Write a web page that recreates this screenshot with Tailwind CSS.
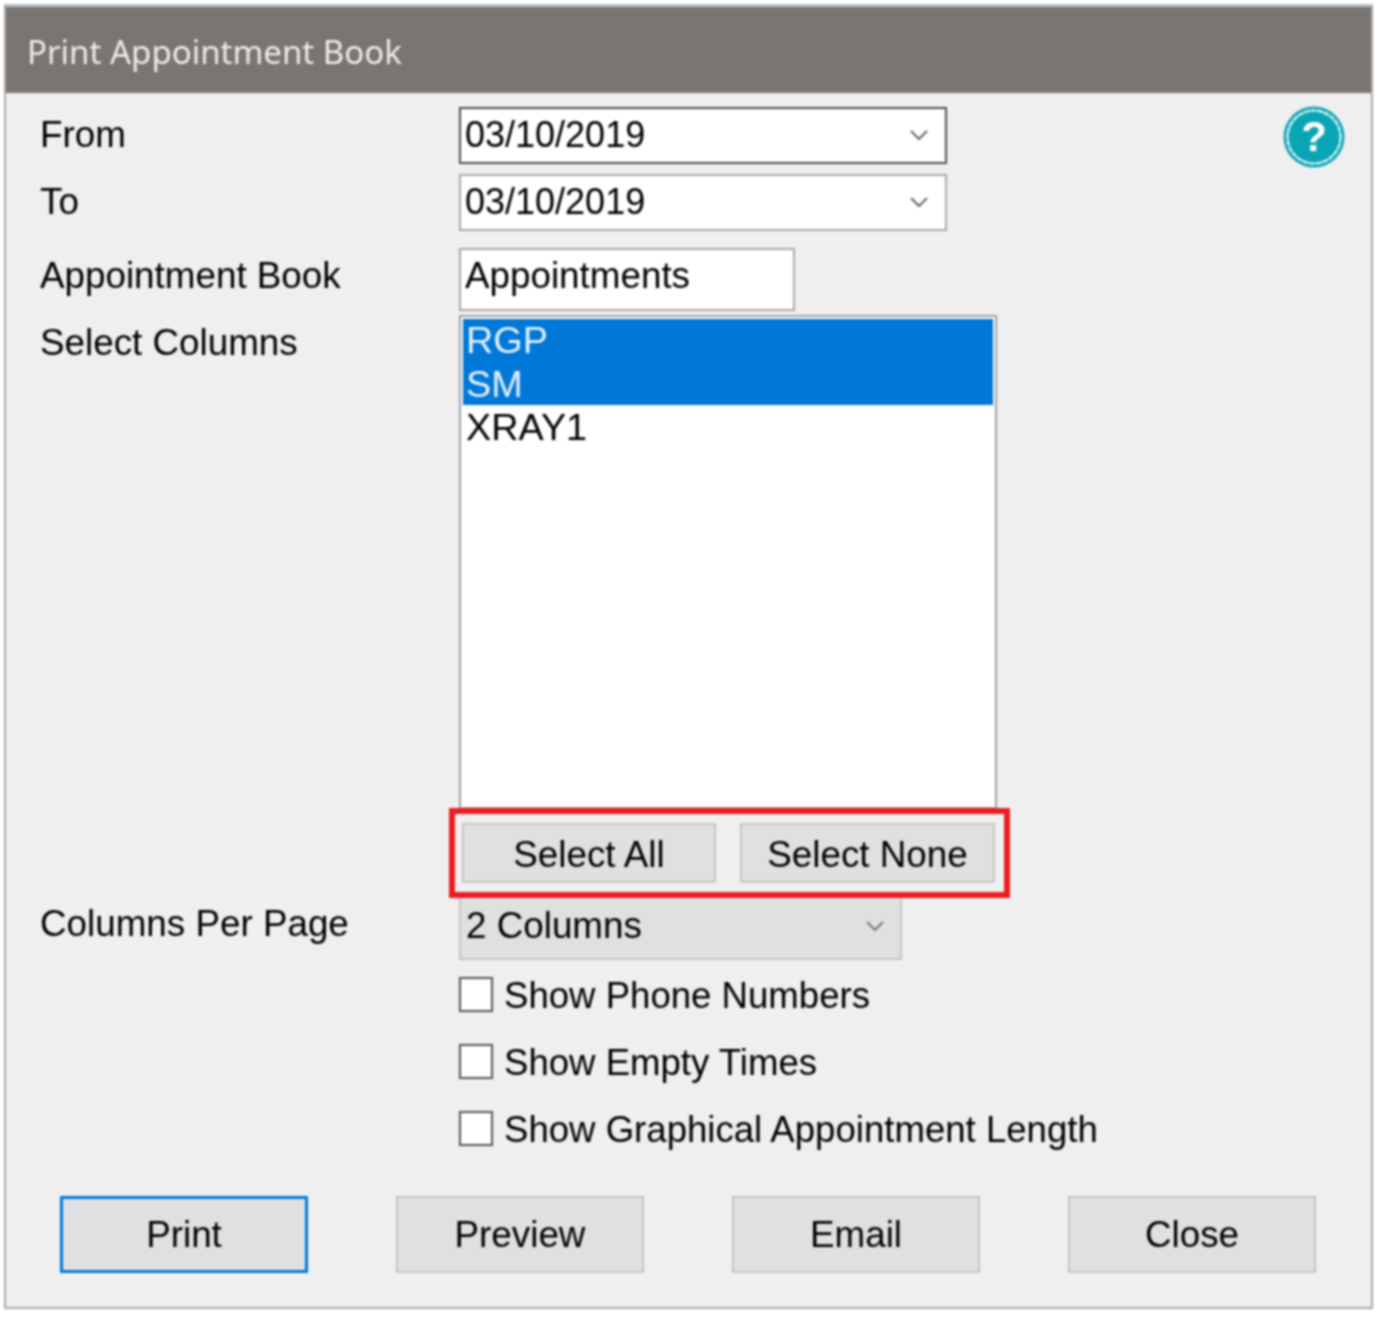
<!DOCTYPE html>
<html><head><meta charset="utf-8"><script src="https://cdn.jsdelivr.net/npm/@tailwindcss/browser@4"></script></head>
<body class="bg-white">
<div class="w-[1382px] h-[1317px] pt-[4px] pl-[4px] font-['Liberation_Sans',sans-serif] text-[36.8px] leading-none text-[#000] blur-[0.8px]">
  <div class="w-[1369px] h-[1305px] border-2 border-t-[3px] border-[#a8a8a8] border-t-[#b9bec2] bg-[#efefef] flex flex-col">
    <div class="h-[86px] shrink-0 bg-[#7b7572] pl-[21px] pt-[2px] flex items-center font-['Noto_Sans',sans-serif] text-[33px] text-[#ececec]">Print Appointment Book</div>
    <div class="relative flex-1 pl-[34px] pt-[14px] flex flex-col">
      <div class="flex h-[57px] items-center">
        <div class="w-[419px]">From</div>
        <div class="w-[488px] h-[57px] border-2 border-[#4e4e4e] bg-white flex items-center justify-between pl-[4px] pr-[16px] pb-[2px] text-[36px]">03/10/2019
          <svg class="w-[20px] h-[12px]" viewBox="0 0 20 12" fill="none" stroke="#666" stroke-width="2"><path d="M2 2l8 8 8-8"/></svg>
        </div>
      </div>
      <div class="flex h-[57px] items-center mt-[10px]">
        <div class="w-[419px]">To</div>
        <div class="w-[488px] h-[57px] border-2 border-[#a8a8a8] bg-white flex items-center justify-between pl-[4px] pr-[16px] pb-[2px] text-[36px]">03/10/2019
          <svg class="w-[20px] h-[12px]" viewBox="0 0 20 12" fill="none" stroke="#666" stroke-width="2"><path d="M2 2l8 8 8-8"/></svg>
        </div>
      </div>
      <div class="flex h-[63px] items-center mt-[17px]">
        <div class="w-[419px] pb-[6px]">Appointment Book</div>
        <div class="w-[336px] h-[63px] border-2 border-[#a8a8a8] bg-white flex items-center pl-[4px] pb-[6px]">Appointments</div>
      </div>
      <div class="flex h-[494px] mt-[4px]">
        <div class="w-[419px] pt-[10px]">Select Columns</div>
        <div class="w-[538px] border-2 border-[#a0a0a8] bg-white pt-[2px] pl-[2px] pr-[2px] text-[37.8px]">
          <div class="bg-[#0078d7] text-[#e4f1ff] pl-[3px] h-[43px] flex items-center">RGP</div>
          <div class="bg-[#0078d7] text-[#e4f1ff] pl-[3px] h-[43px] flex items-center pt-[2px]">SM</div>
          <div class="pl-[3px] h-[45px] flex items-center">XRAY1</div>
        </div>
      </div>
      <div class="ml-[409px] w-[561px] h-[90px] border-[6px] border-[#ed1c24] flex items-center pl-[7px] gap-[24px] relative z-10 -mt-[1px]">
        <div class="w-[254px] h-[60px] border-2 border-[#c4c4c4] bg-[#e0e0e0] flex items-center justify-center pt-[5px]">Select All</div>
        <div class="w-[255px] h-[60px] border-2 border-[#c4c4c4] bg-[#e0e0e0] flex items-center justify-center pt-[5px]">Select None</div>
      </div>
      <div class="flex -mt-[4px]">
        <div class="w-[419px] pt-[12px]">Columns Per Page</div>
        <div class="w-[443px] h-[66px] border-2 border-t-0 border-[#c4c4c4] bg-[#e0e0e0] flex items-center justify-between pl-[5px] pr-[15px]">2 Columns
          <svg class="w-[20px] h-[12px]" viewBox="0 0 20 12" fill="none" stroke="#777" stroke-width="2"><path d="M2 2l8 8 8-8"/></svg>
        </div>
      </div>
      <div class="ml-[419px] mt-[17px] flex flex-col gap-[32px] text-[36.6px]">
        <div class="flex items-center gap-[11px] h-[35px]"><span class="w-[34px] h-[35px] border-2 border-[#555] bg-white"></span><span class="pt-[4px]">Show Phone Numbers</span></div>
        <div class="flex items-center gap-[11px] h-[35px]"><span class="w-[34px] h-[35px] border-2 border-[#555] bg-white"></span><span class="pt-[4px]">Show Empty Times</span></div>
        <div class="flex items-center gap-[11px] h-[35px]"><span class="w-[34px] h-[35px] border-2 border-[#555] bg-white"></span><span class="pt-[4px]">Show Graphical Appointment Length</span></div>
      </div>
      <div class="flex mt-[50px] ml-[20px] gap-[88px]">
        <div class="w-[248px] h-[77px] border-[3px] border-[#0078d7] bg-[#e0e0e0] flex items-center justify-center pt-[2px]">Print</div>
        <div class="w-[248px] h-[77px] border-2 border-[#c4c4c4] bg-[#e0e0e0] flex items-center justify-center pt-[2px]">Preview</div>
        <div class="w-[248px] h-[77px] border-2 border-[#c4c4c4] bg-[#e0e0e0] flex items-center justify-center pt-[2px]">Email</div>
        <div class="w-[248px] h-[77px] border-2 border-[#c4c4c4] bg-[#e0e0e0] flex items-center justify-center pt-[2px]">Close</div>
      </div>
      <svg class="absolute left-[1277px] top-[13px] w-[62px] h-[62px]" viewBox="0 0 62 62">
        <circle cx="31" cy="31" r="30.5" fill="#0aa5b5"/>
        <circle cx="31" cy="31" r="26.5" fill="none" stroke="#e4f8fa" stroke-width="2.2" stroke-dasharray="6 0.7"/>
        <text x="31" y="45" text-anchor="middle" font-family="Liberation Sans" font-weight="700" font-size="42" fill="#ffffff">?</text>
      </svg>
    </div>
  </div>
</div>
</body></html>
